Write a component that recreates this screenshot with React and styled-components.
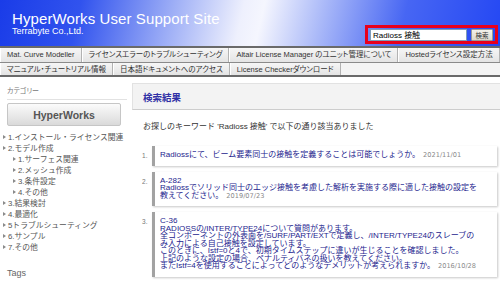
import React from "react";
import styled, { createGlobalStyle } from "styled-components";

const GlobalStyle = createGlobalStyle`
  html, body { margin: 0; padding: 0; background: #ffffff; }
  body {
    width: 500px;
    height: 281px;
    overflow: hidden;
    font-family: "Liberation Sans", "Noto Sans CJK JP", Arial, sans-serif;
    color: #333;
  }
  * { box-sizing: border-box; }
`;

const Page = styled.div`
  width: 500px;
  display: flex;
  flex-direction: column;
`;

const Header = styled.header`
  height: 46px;
  display: flex;
  justify-content: space-between;
  align-items: flex-start;
  padding: 11px 2px 0 12px;
  background: linear-gradient(
    103deg,
    #1a3ce8 0%,
    #3153ee 16%,
    #9cadf6 34%,
    #eef0fd 48%,
    #f5f6fe 52%,
    #a9b8f8 64%,
    #4766f3 80%,
    #2447f3 100%
  );
`;

const Brand = styled.div`
  display: flex;
  flex-direction: column;
  color: #ffffff;
  font-family: "Liberation Sans", Arial, sans-serif;
`;

const SiteTitle = styled.div`
  font-size: 15px;
  line-height: 15px;
  letter-spacing: 0.1px;
`;

const Company = styled.div`
  font-size: 9px;
  line-height: 9px;
  margin-top: 1px;
`;

const SearchBox = styled.form`
  margin-top: 14px;
  width: 133px;
  height: 19px;
  border: 3px solid #e8001c;
  display: flex;
  align-items: center;
  gap: 4px;
  padding: 0 2px;
`;

const SearchInput = styled.input`
  width: 97px;
  height: 12px;
  border: 1px solid #7f9db9;
  background: #ffffff;
  font-family: "Liberation Sans", "Noto Sans CJK JP", sans-serif;
  font-size: 8px;
  padding: 0 2px;
  color: #000;
  outline: none;
`;

const SearchButton = styled.button`
  width: 22px;
  height: 12px;
  padding: 0;
  border: 1px solid #9a9a9a;
  border-radius: 1px;
  background: linear-gradient(#f3f1ea, #dcd8cc);
  font-family: "Noto Sans CJK JP", sans-serif;
  font-size: 6.5px;
  line-height: 10px;
  color: #333;
`;

const Nav = styled.nav`
  border-top: 2px solid #6a6a6a;
  border-bottom: 2px solid #6a6a6a;
  background: #f4f4f4;
`;

const NavRow = styled.ul`
  list-style: none;
  margin: 0;
  padding: 0;
  height: 14px;
  display: flex;
  & + & {
    border-top: 1px solid #8a8a8a;
    height: 13px;
  }
`;

const NavItem = styled.li`
  padding: 0 6px;
  line-height: 13px;
  font-size: 7.5px;
  font-feature-settings: "palt";
  color: #333;
  white-space: nowrap;
  background: linear-gradient(#f6f6f6, #e4e4e4);
  border-left: 1px solid #ffffff;
  border-right: 1px solid #b2b2b2;
`;

const Body = styled.div`
  display: flex;
  align-items: flex-start;
`;

const Sidebar = styled.aside`
  width: 132px;
  flex-shrink: 0;
  padding: 9px 5px 0 7px;
`;

const SideHeading = styled.div`
  font-size: 7px;
  line-height: 10px;
  font-feature-settings: "palt";
  color: #777;
  padding-bottom: 3px;
  border-bottom: 1px solid #e2e2e2;
`;

const CategoryButton = styled.div`
  margin-top: 3px;
  width: 114px;
  height: 23px;
  display: flex;
  align-items: center;
  justify-content: center;
  border: 1px solid #c6c6c6;
  border-radius: 2px;
  background: linear-gradient(#fbfbfb, #dadada);
  font-size: 10.5px;
  font-weight: bold;
  color: #555;
`;

const Tree = styled.ul`
  list-style: none;
  margin: 5px 0 0 -4px;
  padding: 0;
`;

const TreeItem = styled.li`
  display: flex;
  align-items: center;
  height: 11px;
  padding-left: ${(p) => (p.$level === 2 ? 10 : 0)}px;
  font-size: 7.8px;
  color: #555;
  white-space: nowrap;
`;

const Arrow = styled.span`
  width: 0;
  height: 0;
  border-left: 3px solid #8a8a8a;
  border-top: 2px solid transparent;
  border-bottom: 2px solid transparent;
  margin-right: 2px;
`;

const TagsHeading = styled.div`
  margin-top: 16px;
  font-size: 9px;
  line-height: 10px;
  color: #666;
`;

const Main = styled.main`
  flex: 1;
  padding-top: 6px;
`;

const ResultBar = styled.div`
  height: 27px;
  display: flex;
  align-items: center;
  padding-left: 10px;
  background: #f3f3f3;
  border: 1px solid #e2e2e2;
  border-bottom-color: #cdcdcd;
  border-right: none;
`;

const ResultTitle = styled.h2`
  margin: 0;
  font-size: 9.5px;
  font-weight: bold;
  color: #3131a6;
  font-family: "Noto Sans CJK JP", sans-serif;
`;

const Intro = styled.p`
  margin: 12px 0 0 11px;
  font-size: 8px;
  line-height: 10px;
  color: #333;
`;

const ResultList = styled.ol`
  list-style: none;
  margin: 14px 3px 0 0;
  padding: 0;
  display: flex;
  flex-direction: column;
  gap: 6px;
`;

const ResultItem = styled.li`
  display: flex;
  align-items: flex-start;
`;

const Num = styled.span`
  width: 20px;
  flex-shrink: 0;
  padding: 6px 0 0 10px;
  font-size: 6.5px;
  line-height: 7.5px;
  color: #777;
`;

const Card = styled.div`
  flex: 1;
  border-left: 3px solid #a2a2a2;
  background: #ffffff;
  box-shadow: 1px 1px 2px rgba(0, 0, 0, 0.22);
  padding: 5px 2px 6px 5px;
  font-size: 8px;
  line-height: 7.5px;
  color: #24248e;
  white-space: nowrap;
`;

const DateText = styled.span`
  margin-left: 3px;
  font-family: "DejaVu Sans", sans-serif;
  font-size: 6.6px;
  color: #8a8a8a;
`;

const navRow1 = [
  "Mat. Curve Modeller",
  "ライセンスエラーのトラブルシューティング",
  "Altair License Manager のユニット管理について",
  "Hostedライセンス設定方法",
];
const navRow2 = [
  "マニュアル・チュートリアル情報",
  "日本語ドキュメントへのアクセス",
  "License Checkerダウンロード",
];

const tree = [
  { label: "1.インストール・ライセンス関連", level: 1 },
  { label: "2.モデル作成", level: 1 },
  { label: "1.サーフェス関連", level: 2 },
  { label: "2.メッシュ作成", level: 2 },
  { label: "3.条件設定", level: 2 },
  { label: "4.その他", level: 2 },
  { label: "3.結果検討", level: 1 },
  { label: "4.最適化", level: 1 },
  { label: "5トラブルシューティング", level: 1 },
  { label: "6.サンプル", level: 1 },
  { label: "7.その他", level: 1 },
];

const results = [
  {
    lines: ["Radiossにて、ビーム要素同士の接触を定義することは可能でしょうか。"],
    date: "2021/11/01",
  },
  {
    lines: [
      "A-282",
      "Radiossでソリッド同士のエッジ接触を考慮した解析を実施する際に適した接触の設定を",
      "教えてください。",
    ],
    date: "2019/07/23",
  },
  {
    lines: [
      "C-36",
      "RADIOSSの/INTER/TYPE24について質問があります。",
      "全コンポーネントの外表面を/SURF/PART/EXTで定義し、/INTER/TYPE24のスレーブの",
      "み入力による自己接触を設定しています。",
      "このときに、Istf=0と4で、初期タイムステップに違いが生じることを確認しました。",
      "上記のような設定の場合、ペナルティバネの扱いを教えてください。",
      "またIstf=4を使用することによってどのようなデメリットが考えられますか。",
    ],
    date: "2016/10/28",
  },
];

export default function App() {
  return (
    <Page>
      <GlobalStyle />
      <Header>
        <Brand>
          <SiteTitle>HyperWorks User Support Site</SiteTitle>
          <Company>Terrabyte Co.,Ltd.</Company>
        </Brand>
        <SearchBox onSubmit={(e) => e.preventDefault()}>
          <SearchInput defaultValue="Radioss 接触" />
          <SearchButton type="submit">検索</SearchButton>
        </SearchBox>
      </Header>
      <Nav>
        <NavRow>
          {navRow1.map((t) => (
            <NavItem key={t}>{t}</NavItem>
          ))}
        </NavRow>
        <NavRow>
          {navRow2.map((t) => (
            <NavItem key={t}>{t}</NavItem>
          ))}
        </NavRow>
      </Nav>
      <Body>
        <Sidebar>
          <SideHeading>カテゴリー</SideHeading>
          <CategoryButton>HyperWorks</CategoryButton>
          <Tree>
            {tree.map((t) => (
              <TreeItem key={t.label} $level={t.level}>
                <Arrow />
                {t.label}
              </TreeItem>
            ))}
          </Tree>
          <TagsHeading>Tags</TagsHeading>
        </Sidebar>
        <Main>
          <ResultBar>
            <ResultTitle>検索結果</ResultTitle>
          </ResultBar>
          <Intro>お探しのキーワード 'Radioss 接触' で以下の通り該当ありました</Intro>
          <ResultList>
            {results.map((r, i) => (
              <ResultItem key={r.date}>
                <Num>{i + 1}.</Num>
                <Card>
                  {r.lines.map((l, j) => (
                    <React.Fragment key={j}>
                      {j > 0 && <br />}
                      {l}
                    </React.Fragment>
                  ))}
                  <DateText>{r.date}</DateText>
                </Card>
              </ResultItem>
            ))}
          </ResultList>
        </Main>
      </Body>
    </Page>
  );
}
